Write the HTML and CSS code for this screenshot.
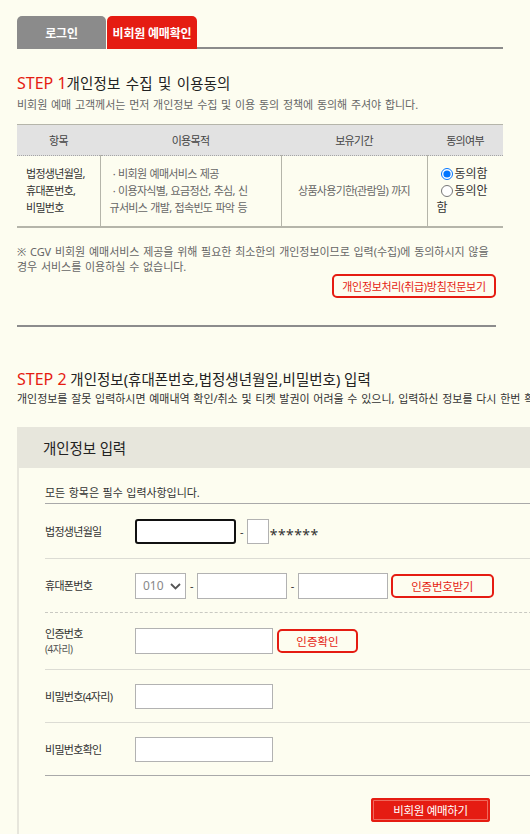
FILE: index.html
```html
<!DOCTYPE html>
<html lang="ko">
<head>
<meta charset="utf-8">
<title>비회원 예매확인</title>
<link rel="stylesheet" href="styles.css">
</head>
<body>
<div class="page">
  <div class="tabs">
    <div class="tab tab-login">로그인</div>
    <div class="tab tab-active">비회원 예매확인</div>
    <div class="tab-rest"></div>
  </div>

  <section class="step step1">
    <h3 class="step-title"><span class="step-no">STEP 1</span><span class="step-ko">개인정보 수집 및 이용동의</span></h3>
    <p class="desc desc-gray">비회원 예매 고객께서는 먼저 개인정보 수집 및 이용 동의 정책에 동의해 주셔야 합니다.</p>
    <table class="agree">
      <colgroup>
        <col class="col-a"><col class="col-b"><col class="col-c"><col class="col-d">
      </colgroup>
      <thead>
        <tr><th>항목</th><th>이용목적</th><th>보유기간</th><th>동의여부</th></tr>
      </thead>
      <tbody>
        <tr>
          <td class="c-item">법정생년월일,<br>휴대폰번호,<br>비밀번호</td>
          <td class="c-purpose">&nbsp;· 비회원 예매서비스 제공<br>&nbsp;· 이용자식별, 요금정산, 추심, 신<br>규서비스 개발, 접속빈도 파악 등</td>
          <td class="c-period">상품사용기한(관람일) 까지</td>
          <td class="c-agree">
            <label class="radio"><input type="radio" name="agree" checked>동의함</label><br>
            <label class="radio"><input type="radio" name="agree">동의안<br>함</label>
          </td>
        </tr>
      </tbody>
    </table>
    <p class="notice">※ CGV 비회원 예매서비스 제공을 위해 필요한 최소한의 개인정보이므로 입력(수집)에 동의하시지 않을<br>경우 서비스를 이용하실 수 없습니다.</p>
    <div class="notice-btn-row">
      <button type="button" class="btn-line btn-policy">개인정보처리(취급)방침전문보기</button>
    </div>
  </section>

  <div class="divider"></div>

  <section class="step step2">
    <h3 class="step-title"><span class="step-no">STEP 2</span><span class="step-ko step-ko2">&nbsp;개인정보(휴대폰번호,법정생년월일,비밀번호) 입력</span></h3>
    <p class="desc desc-dark">개인정보를 잘못 입력하시면 예매내역 확인/취소 및 티켓 발권이 어려울 수 있으니, 입력하신 정보를 다시 한번 확인해 주시기 바랍니다.</p>

    <div class="form-box">
      <div class="form-head">개인정보 입력</div>
      <div class="form-body">
        <p class="req">모든 항목은 필수 입력사항입니다.</p>

        <div class="row row-birth">
          <div class="label">법정생년월일</div>
          <input type="text" class="inp inp-focus inp-birth">
          <span class="dash">-</span>
          <input type="text" class="inp inp-one">
          <span class="mask">******</span>
        </div>

        <div class="row row-phone">
          <div class="label">휴대폰번호</div>
          <div class="select-wrap">
            <select class="select"><option>010</option></select>
            <svg class="chev" width="11" height="7" viewBox="0 0 11 7"><path d="M1 1l4.5 4.5L10 1" fill="none" stroke="#555" stroke-width="1.8"/></svg>
          </div>
          <span class="dash">-</span>
          <input type="text" class="inp inp-phone">
          <span class="dash">-</span>
          <input type="text" class="inp inp-phone">
          <button type="button" class="btn-line btn-sms">인증번호받기</button>
        </div>

        <div class="row row-auth">
          <div class="label">인증번호<br><span class="sub">(4자리)</span></div>
          <input type="text" class="inp inp-mid inp-tall">
          <button type="button" class="btn-line btn-auth">인증확인</button>
        </div>

        <div class="row">
          <div class="label">비밀번호(4자리)</div>
          <input type="password" class="inp inp-mid">
        </div>

        <div class="row row-last">
          <div class="label">비밀번호확인</div>
          <input type="password" class="inp inp-mid">
        </div>

        <div class="submit-row">
          <button type="button" class="btn-submit">비회원 예매하기</button>
        </div>
      </div>
    </div>
  </section>
</div>
</body>
</html>
```
FILE: styles.css
```css
* { box-sizing: border-box; }
html { overflow-x: hidden; }
body {
  margin: 0;
  background: #fdfdf0;
  font-family: "Noto Sans", "Noto Sans CJK KR", sans-serif;
  color: #333;
}
.page { padding: 16px 0 0 17px; width: 640px; }

/* tabs */
.tabs { display: flex; width: 486px; height: 33px; }
.tab {
  display: flex; align-items: center; justify-content: center;
  color: #fff; font-weight: bold; font-size: 12px; letter-spacing: -0.2px;
  border-radius: 5px 5px 0 0;
}
.tab-login { width: 89px; background: #8b8b8b; margin-right: 1px; }
.tab-active { width: 90px; background: #e51c12; }
.tab-rest { flex: 1; border-bottom: 2px solid #8b8b8b; }

/* step headings */
.step1 { width: 486px; }
.step-title {
  margin: 24px 0 0; height: 20px; line-height: 20px;
  font-weight: normal; display: flex; align-items: baseline; white-space: nowrap;
}
.step-no { color: #e51c12; font-size: 16px; }
.step-ko { color: #222; font-size: 14.5px; letter-spacing: 0.1px; word-spacing: 1.5px; }
.step-ko2 { letter-spacing: 0; word-spacing: 0; }
.step2 .step-title { margin-top: 42px; }

.desc {
  margin: 4px 0 0; font-size: 11px; letter-spacing: -0.05px; word-spacing: 1px;
  line-height: 16px; white-space: nowrap;
}
.step2 .desc { margin-top: 2px; }
.desc-gray { color: #666; }
.desc-dark { color: #333; }

/* agreement table */
.agree {
  width: 486px; margin-top: 11px; border-collapse: collapse; table-layout: fixed;
  font-size: 11px; letter-spacing: -0.7px; word-spacing: 1px;
}
.col-a { width: 83px; }
.col-b { width: 181px; }
.col-c { width: 146px; }
.col-d { width: 76px; }
.agree th {
  height: 31px; padding: 0; background: #e2e2e2; color: #444; font-weight: normal;
  border-top: 1px solid #b5b5aa; border-bottom: 1px dotted #a5a5a5;
}
.agree td {
  padding: 9px 9px 10px; line-height: 17px; vertical-align: middle; white-space: nowrap;
  border-left: 1px solid #b5b5aa; border-bottom: 2px solid #b5b5aa;
}
.agree td:first-child { border-left: none; }
.c-item { color: #333; }
.c-purpose { color: #666; padding-left: 10px; }
.c-period { color: #666; text-align: center; }
.c-agree { color: #333; font-size: 12px; letter-spacing: 0; line-height: 16.5px; }
.radio { cursor: pointer; }
.radio input {
  width: 12px; height: 12px; margin: 0 2px 0 4px; vertical-align: -2px;
}

.notice {
  margin: 16px 0 0; font-size: 11px; letter-spacing: -0.05px; word-spacing: 1px;
  line-height: 15px; color: #666; white-space: nowrap;
}
.notice-btn-row { display: flex; justify-content: flex-end; padding-right: 7px; }

.btn-line {
  display: flex; align-items: center; justify-content: center;
  height: 24px; padding: 0; background: transparent;
  border: 2px solid #e51c12; border-radius: 5px; color: #e51c12;
  font-family: inherit; font-size: 11.5px; letter-spacing: -0.3px; cursor: pointer;
}
.btn-policy { width: 164px; font-size: 11px; letter-spacing: -0.3px; }

.divider { width: 479px; height: 2px; margin-top: 27px; background: #8c8c8c; }

/* form */
.form-box { width: 560px; margin-top: 20px; }
.form-head {
  height: 41px; display: flex; align-items: center; padding-left: 26px;
  background: #e7e6dc; color: #222; font-size: 14.5px; letter-spacing: -0.1px;
}
.form-body { border-left: 2px solid #e7e6dc; padding: 18px 0 60px 26px; }
.req {
  margin: 0; padding-bottom: 3px; line-height: 14px;
  font-size: 11px; letter-spacing: -0.05px; word-spacing: 0.8px; color: #333;
  border-bottom: 1px solid #a9a9a9;
}
.row {
  display: flex; align-items: center; height: 53px;
  border-bottom: 1px solid #dcdcd4;
  font-size: 11px; letter-spacing: -0.7px;
}
.row-birth { height: 55px; }
.row-phone { height: 54px; border-bottom: 1px dashed #c9c9c2; }
.row-auth { height: 57px; }
.row-last { border-bottom-color: #a9a9a9; }
.label { width: 90px; color: #333; line-height: 15px; }
.label .sub { font-size: 10px; color: #555; letter-spacing: -0.5px; }

.inp {
  height: 25px; padding: 0 4px; margin: 0; background: #fff;
  border: 1px solid #b2b2b2; border-radius: 0; font-family: inherit; font-size: 12px;
}
.inp:focus { outline: none; }
.inp-focus { border: 2px solid #111; border-radius: 3px; }
.inp-birth { width: 101px; }
.inp-one { width: 22px; }
.inp-phone { width: 90px; height: 26px; }
.inp-mid { width: 138px; }
.inp-tall { height: 26px; }
.dash { margin: 0 4px; color: #333; font-size: 11px; }
.mask {
  font-size: 14px; line-height: 1; letter-spacing: 0.4px; color: #333;
  padding-top: 7px; margin-left: 1px;
}

.select-wrap { position: relative; width: 51px; height: 26px; }
.select {
  appearance: none; -webkit-appearance: none;
  width: 51px; height: 26px; margin: 0; padding: 0 0 0 7px;
  background: #fff; border: 1px solid #b2b2b2; border-radius: 0;
  font-family: inherit; font-size: 12px; color: #888; letter-spacing: 0;
}
.chev { position: absolute; right: 5px; top: 10px; pointer-events: none; }

.btn-sms { width: 103px; margin-left: 3px; }
.btn-auth { width: 81px; margin-left: 4px; letter-spacing: 0; }

.submit-row { display: flex; padding: 22px 0 0 326px; }
.btn-submit {
  width: 119px; height: 24px; padding: 0; border: none; border-radius: 3px;
  background: #e51c12; color: #fff;
  box-shadow: inset 0 0 0 2px #e51c12, inset 0 0 0 3px #ef6a5d;
  font-family: inherit; font-size: 11.5px; letter-spacing: -0.3px; cursor: pointer;
}
```
